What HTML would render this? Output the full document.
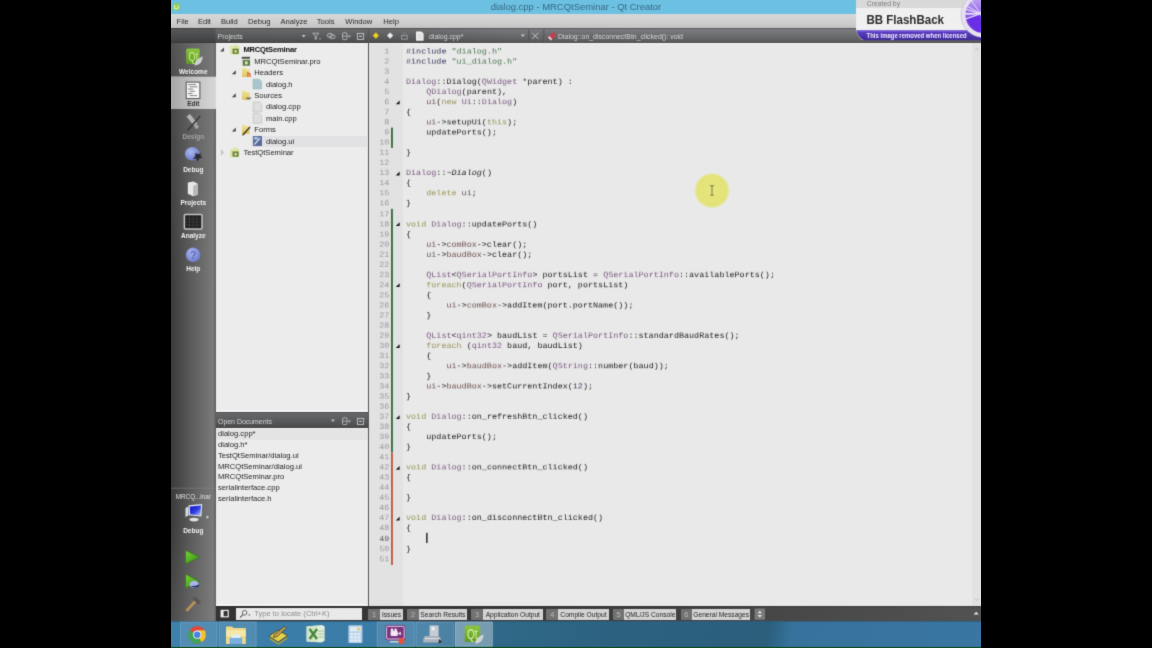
<!DOCTYPE html>
<html lang="en"><head><meta charset="utf-8"><title>dialog.cpp - MRCQtSeminar - Qt Creator</title>
<style>
*{box-sizing:border-box;margin:0;padding:0}
html,body{width:1152px;height:648px;background:#000;overflow:hidden}
body{font-family:"Liberation Sans",sans-serif;position:relative;color:#333}
.a,#scr div,#scr span,#scr svg,#scr i.b{position:absolute}
#scr pre span,#scr pre b,#scr pre i{position:static}
#scr{position:absolute;left:171px;top:0;width:810px;height:648px;overflow:hidden;background:#e9e9e9;filter:url(#soft)}
#title{left:0;top:0;width:810px;height:13.7px;background:#6cc1e2}
#title .tt{left:0;width:810px;top:0;height:13.6px;line-height:13.4px;text-align:center;font-size:9.45px;color:#3a6880}
#menu{left:0;top:13.7px;width:810px;height:14.3px;background:linear-gradient(#d6d7d8,#cfcfd0 55%,#c3c3c3)}
#menu span{top:1.1px;height:14.3px;line-height:14.3px;font-size:7.6px;color:#262626}
.bar{background:linear-gradient(#4a4a4a 0,#7a7b7e 1.4px,#727375 35%,#626364 75%,#595a5b 92%,#4c4c4c)}
#tb{left:0;top:28px;width:810px;height:15.3px}
#tb:before{content:'';position:absolute;left:0;top:0;width:810px;height:15.3px;background:linear-gradient(90deg,rgba(0,0,0,0.3) 0,rgba(0,0,0,0.3) 44px,rgba(0,0,0,0.17) 45px,rgba(0,0,0,0.15) 197px,rgba(0,0,0,0.1) 260px,rgba(0,0,0,0.03) 340px,rgba(0,0,0,0) 500px)}
#odh:before{content:'';position:absolute;left:0;top:0;width:100%;height:100%;background:rgba(0,0,0,0.16)}
.tbt{font-size:6.95px;color:#d4d4d4;line-height:15.3px;top:0.9px;white-space:nowrap}
#mode{left:0;top:43.3px;width:44.6px;height:578.1px;background:linear-gradient(rgba(116,116,116,0.4),rgba(112,112,112,0.25) 60px,rgba(110,110,110,0) 260px,rgba(128,128,128,0) 480px,rgba(128,128,128,0.25)),linear-gradient(90deg,#3a3a3a,#585858 40%,#7a7a7a 94%,#5a5a5a)}
.ml{left:0;width:44.6px;text-align:center;font-size:6.5px;font-weight:bold;color:#f2f2f2;line-height:8px;white-space:nowrap}
#tree{left:44.6px;top:43.3px;width:152.4px;height:370px;background:linear-gradient(#f8f8f8 0,#f4f4f4 0.9px,#ececec 1.6px,#ececec 366.5px,#f6f6f6 367.5px)}
.tr{font-size:7.6px;line-height:11.4px;height:11.4px;color:#1e1e1e;white-space:nowrap}
#odh{left:44.6px;top:412.4px;width:152.4px;height:15.3px}
#odl{left:44.6px;top:427.7px;width:152.4px;height:178.1px;background:linear-gradient(#f6f6f6 0,#ececec 1.4px,#ececec 175.6px,#f6f6f6 176.6px)}
#split{left:196.8px;top:28px;width:1.4px;height:578px;background:#555}
#ed{left:198.2px;top:43.3px;width:611.8px;height:562.5px;background:linear-gradient(#f6f6f6 0,#f2f2f2 0.9px,#e9e9e9 1.6px)}
#gut{left:0;top:1.2px;width:34.2px;height:561.3px;background:#e2e2e2}
pre{font-family:"Liberation Mono",monospace;font-size:8.44px;line-height:11.033px;position:absolute;white-space:pre;color:#222;transform:translateY(0.1px) scaleY(0.92);transform-origin:0 0;will-change:transform;text-rendering:geometricPrecision}
#ln{left:0;top:4.2px;width:20.4px;text-align:right;color:#9898a0}
#code{left:36.8px;top:4.2px}
.k{color:#96965a}.t{color:#7a5a80}.f{color:#705252}.s{color:#4f7a55}.p{color:#3a3a62}.n{color:#3a3a62}
#sb{left:44.6px;top:605.5px;width:765.4px;height:15.8px;background:linear-gradient(rgba(0,0,0,0.22),rgba(0,0,0,0) 2px),linear-gradient(90deg,#333 0,#383838 30%,#3e3e3e 55%,#4a4a4a 80%,#525252)}
.ob{top:3px;height:11.2px;font-size:6.65px;line-height:12.2px;white-space:nowrap;overflow:hidden}
.obn{background:#727272;color:#bcbcbc;text-align:center;font-size:7.4px}
.obl{background:#d4d4d4;color:#262626;text-align:center;}
#task{left:0;top:621.2px;width:810px;height:26px;background:linear-gradient(#2a5a78 0,rgba(42,90,120,0) 1.6px),linear-gradient(100deg,#3c80ac 0,#3a7ba6 30%,#2f6888 40.5%,#2c6280 55%,#2b5f7c 73.5%,#37729c 76.5%,#3a76a2)}
#grn{left:0;top:646.6px;width:810px;height:3px;background:#0a4a16}
</style></head>
<body>
<div id="scr">
<svg width="0" height="0" style="position:absolute"><filter id="soft" x="0" y="0" width="100%" height="100%" color-interpolation-filters="sRGB"><feConvolveMatrix order="3" kernelMatrix="0.0169 0.0962 0.0169 0.0962 0.5476 0.0962 0.0169 0.0962 0.0169" divisor="1" edgeMode="duplicate" preserveAlpha="true"/></filter></svg>
<div id="title"><div class="tt">dialog.cpp - MRCQtSeminar - Qt Creator</div></div>
<div id="menu"><span style="left:5.6px">File</span><span style="left:26.9px">Edit</span><span style="left:49.9px">Build</span><span style="left:77.1px">Debug</span><span style="left:109.5px">Analyze</span><span style="left:145.8px">Tools</span><span style="left:174.3px">Window</span><span style="left:212.3px">Help</span></div>
<div id="tb" class="bar">
<span class="tbt" style="left:46.6px">Projects</span>
<span class="tbt" style="left:258px">dialog.cpp*</span>
<span class="tbt" style="left:387px">Dialog::on_disconnectBtn_clicked(): void</span>
</div>
<div id="mode">
<div style="left:0;top:32.8px;width:44.6px;height:32.8px;background:linear-gradient(90deg,#a6a6a6,#c2c2c2 50%,#d6d6d6);border-top:0.8px solid #8a8a8a"></div>
<span class="ml" style="top:24.5px;color:#f2f2f2">Welcome</span>
<span class="ml" style="top:56.9px;color:#333">Edit</span>
<span class="ml" style="top:90.2px;color:#a4a4a4">Design</span>
<span class="ml" style="top:123.1px;color:#f2f2f2">Debug</span>
<span class="ml" style="top:156.0px;color:#f2f2f2">Projects</span>
<span class="ml" style="top:189.1px;color:#f2f2f2">Analyze</span>
<span class="ml" style="top:221.7px;color:#f2f2f2">Help</span>
<span class="ml" style="top:483.3px;color:#f2f2f2">Debug</span>
<span class="ml" style="top:449.4px;font-weight:normal;color:#e0e0e0;font-size:6.3px">MRCQ...inar</span>
</div>
<div id="tree">
<span class="tr" style="left:27.8px;top:1.10px;font-weight:bold;color:#0c0c0c;letter-spacing:-0.2px">MRCQtSeminar</span>
<span class="tr" style="left:38.7px;top:12.52px;">MRCQtSeminar.pro</span>
<span class="tr" style="left:38.7px;top:23.94px;">Headers</span>
<span class="tr" style="left:50.4px;top:35.36px;">dialog.h</span>
<span class="tr" style="left:38.7px;top:46.78px;">Sources</span>
<span class="tr" style="left:50.4px;top:58.20px;">dialog.cpp</span>
<span class="tr" style="left:50.4px;top:69.62px;">main.cpp</span>
<span class="tr" style="left:38.7px;top:81.04px;">Forms</span>
<div style="left:35.199999999999996px;top:92.46px;width:116.2px;height:11.4px;background:#e2e2e4"></div>
<span class="tr" style="left:50.4px;top:92.46px;">dialog.ui</span>
<span class="tr" style="left:27.8px;top:103.88px;">TestQtSeminar</span>
</div>
<div id="odh" class="bar"><span class="tbt" style="left:2.4px;top:1.4px">Open Documents</span></div>
<div id="odl">
<div style="left:0;top:1.10px;width:152.4px;height:10.8px;background:#e4e4e4"></div>
<span class="tr" style="left:2.4px;top:0.80px">dialog.cpp*</span>
<span class="tr" style="left:2.4px;top:11.55px">dialog.h*</span>
<span class="tr" style="left:2.4px;top:22.30px">TestQtSeminar/dialog.ui</span>
<span class="tr" style="left:2.4px;top:33.05px">MRCQtSeminar/dialog.ui</span>
<span class="tr" style="left:2.4px;top:43.80px">MRCQtSeminar.pro</span>
<span class="tr" style="left:2.4px;top:54.55px">serialinterface.cpp</span>
<span class="tr" style="left:2.4px;top:65.30px">serialinterface.h</span>
</div>
<div id="split"></div>
<div id="ed"><div id="gut"></div>
<pre id="ln">1
2
3
4
5
6
7
8
9
10
11
12
13
14
15
16
17
18
19
20
21
22
23
24
25
26
27
28
29
30
31
32
33
34
35
36
37
38
39
40
41
42
43
44
45
46
47
48
<b style="font-weight:normal;color:#555">49</b>
50
51</pre>
<pre id="code"><span class="p">#include</span> <span class="s">"dialog.h"</span>
<span class="p">#include</span> <span class="s">"ui_dialog.h"</span>

<span class="t">Dialog</span>::Dialog(<span class="t">QWidget</span> *parent) :
    <span class="t">QDialog</span>(parent),
    <span class="f">ui</span>(<span class="k">new</span> <span class="t">Ui</span>::<span class="t">Dialog</span>)
{
    <span class="f">ui</span>-&gt;setupUi(<span class="k">this</span>);
    updatePorts();

}

<span class="t">Dialog</span>::<i>~Dialog</i>()
{
    <span class="k">delete</span> <span class="f">ui</span>;
}

<span class="k">void</span> <span class="t">Dialog</span>::updatePorts()
{
    <span class="f">ui</span>-&gt;<span class="f">comBox</span>-&gt;clear();
    <span class="f">ui</span>-&gt;<span class="f">baudBox</span>-&gt;clear();

    <span class="t">QList</span>&lt;<span class="t">QSerialPortInfo</span>&gt; portsList = <span class="t">QSerialPortInfo</span>::availablePorts();
    <span class="k">foreach</span>(<span class="t">QSerialPortInfo</span> port, portsList)
    {
        <span class="f">ui</span>-&gt;<span class="f">comBox</span>-&gt;addItem(port.portName());
    }

    <span class="t">QList</span>&lt;<span class="t">qint32</span>&gt; baudList = <span class="t">QSerialPortInfo</span>::standardBaudRates();
    <span class="k">foreach</span> (<span class="t">qint32</span> baud, baudList)
    {
        <span class="f">ui</span>-&gt;<span class="f">baudBox</span>-&gt;addItem(<span class="t">QString</span>::number(baud));
    }
    <span class="f">ui</span>-&gt;<span class="f">baudBox</span>-&gt;setCurrentIndex(<span class="n">12</span>);
}

<span class="k">void</span> <span class="t">Dialog</span>::on_refreshBtn_clicked()
{
    updatePorts();
}

<span class="k">void</span> <span class="t">Dialog</span>::on_connectBtn_clicked()
{

}

<span class="k">void</span> <span class="t">Dialog</span>::on_disconnectBtn_clicked()
{

}
</pre>
</div>
<div id="sb">
<span class="ob obn" style="left:152.8px;width:11.2px">1</span><span class="ob obl" style="left:164.0px;width:23.8px">Issues</span>
<span class="ob obn" style="left:191.6px;width:11.5px">2</span><span class="ob obl" style="left:203.1px;width:48.4px">Search Results</span>
<span class="ob obn" style="left:255.5px;width:11.8px">3</span><span class="ob obl" style="left:267.3px;width:59.9px">Application Output</span>
<span class="ob obn" style="left:330.8px;width:11.7px">4</span><span class="ob obl" style="left:342.5px;width:50.7px">Compile Output</span>
<span class="ob obn" style="left:397.3px;width:11.1px">5</span><span class="ob obl" style="left:408.4px;width:52.5px">QML/JS Console</span>
<span class="ob obn" style="left:465.0px;width:11.4px">6</span><span class="ob obl" style="left:476.4px;width:58.4px">General Messages</span>
<div style="left:20.6px;top:2.9px;width:125.4px;height:11.4px;background:#e9e9e9"></div>
<span style="left:38.7px;top:2.9px;line-height:11.4px;font-size:7.55px;color:#8c8c8c;white-space:nowrap">Type to locate (Ctrl+K)</span>
</div>
<div id="task"></div><div id="grn"></div>
<svg id="ov" viewBox="171 0 810 648" width="810" height="648" style="left:0;top:0">
<defs>
<linearGradient id="gq" x1="0" y1="0" x2="0" y2="1"><stop offset="0" stop-color="#8cc63f"/><stop offset="1" stop-color="#5f9a22"/></linearGradient>
<linearGradient id="ged" x1="0" y1="0" x2="1" y2="0"><stop offset="0" stop-color="#a6a6a6"/><stop offset="0.5" stop-color="#c2c2c2"/><stop offset="1" stop-color="#d6d6d6"/></linearGradient>
<linearGradient id="gfo" x1="0" y1="0" x2="0" y2="1"><stop offset="0" stop-color="#efe49c"/><stop offset="1" stop-color="#dcc462"/></linearGradient>
<linearGradient id="gpl" x1="0" y1="0" x2="1" y2="1"><stop offset="0" stop-color="#7ad43a"/><stop offset="1" stop-color="#2f8a10"/></linearGradient>
<radialGradient id="gbl" cx="0.4" cy="0.35" r="0.7"><stop offset="0" stop-color="#aab8f0"/><stop offset="1" stop-color="#6a78c8"/></radialGradient>
<linearGradient id="gsc" x1="0" y1="0" x2="1" y2="1"><stop offset="0" stop-color="#1010c8"/><stop offset="0.55" stop-color="#3040e0"/><stop offset="1" stop-color="#b8c8f8"/></linearGradient>
<linearGradient id="gpur" x1="0" y1="0" x2="0" y2="1"><stop offset="0" stop-color="#9078e8"/><stop offset="0.22" stop-color="#5a3cc0"/><stop offset="1" stop-color="#3f2a98"/></linearGradient>
<radialGradient id="gyc" cx="0.5" cy="0.5" r="0.5"><stop offset="0" stop-color="#e8e88c"/><stop offset="0.25" stop-color="#e4e47c"/><stop offset="0.86" stop-color="#e3e378"/><stop offset="1" stop-color="#e6e6a0" stop-opacity="0.5"/></radialGradient>
<linearGradient id="gdisc" x1="0" y1="0" x2="0" y2="1"><stop offset="0" stop-color="#c0aaf4"/><stop offset="0.45" stop-color="#9468e6"/><stop offset="0.7" stop-color="#7a44e2"/><stop offset="1" stop-color="#6a30e0"/></linearGradient>
</defs>
<rect x="186.2" y="48.6" width="13.6" height="15.4" rx="1.6" fill="url(#gq)"/>
<text x="188.6" y="61.2" font-family="Liberation Sans,sans-serif" font-size="13.6" fill="#cdec98" textLength="9.6" lengthAdjust="spacingAndGlyphs">Qt</text>
<path d="M194.4 65.6 Q194.6 59.5 202.8 56.3 Q202.6 65 194.4 65.6z" fill="#cfd0d4"/>
<rect x="186.2" y="82.1" width="13.7" height="16.5" fill="#f6f6f6" stroke="#5a5a5a" stroke-width="1.1"/>
<rect x="188" y="84.2" width="8" height="0.9" fill="#777"/>
<rect x="189.5" y="86.4" width="8.0" height="0.9" fill="#777"/>
<rect x="188" y="88.6" width="5" height="0.9" fill="#777"/>
<rect x="189.5" y="90.8" width="5.5" height="0.9" fill="#777"/>
<rect x="188" y="93.0" width="4.5" height="0.9" fill="#777"/>
<rect x="189.5" y="95.2" width="7.5" height="0.9" fill="#777"/>
<path d="M186.5 116.5 l3.5 -2.5 l7.5 9.5 l-3.5 2.6z" fill="#b4b4b4"/>
<path d="M199.8 115.5 l1 0.9 l-11.5 13.4 l-2.6 1.4 l1.2 -2.6z" fill="#3c3c3c"/>
<circle cx="196.6" cy="126.8" r="2" fill="#a8a8a8"/>
<ellipse cx="192.2" cy="153.8" rx="7.4" ry="6.8" fill="url(#gbl)"/>
<path d="M195.5 153 l3.5 1.2 l2.5 -1 l-1.2 2.6 l2.4 2.2 l-3.4 0.2 l-1.4 3.2 l-1.6 -2.8 l-3.6 0.6 l2.4 -2.6z" fill="#2a2a30"/>
<path d="M187.8 182.5 l5.6 -1 l4.4 2.2 v11 l-4.6 1.6 l-5.4 -2.6z" fill="#e8e8e8"/>
<path d="M193.2 186 l4.6 -2.3 v11 l-4.6 1.6z" fill="#b8b8b8"/>
<rect x="184.4" y="214.6" width="17.6" height="14.4" rx="1" fill="#202020" stroke="#c4c4c4" stroke-width="1.5"/>
<path d="M186 219h14.4M186 222h14.4M186 225h14.4M189.5 216v11.6M193.2 216v11.6M196.9 216v11.6" stroke="#484848" stroke-width="0.6" fill="none"/>
<circle cx="193.1" cy="254.8" r="7.3" fill="url(#gbl)"/>
<text x="193.1" y="258.6" text-anchor="middle" font-family="Liberation Sans,sans-serif" font-weight="bold" font-size="10.5" fill="#5a6cb8">?</text>
<rect x="171" y="487.8" width="44.6" height="0.7" fill="#8a8a8a" opacity="0.7"/>
<path d="M185.5 508 l3 -1.5 v9 l-3 1.5z" fill="#d8dce4"/>
<path d="M188.6 505.2 l13.6 -1.2 l-0.8 12.6 l-12.4 -1.4z" fill="#dfe4f0"/>
<path d="M189.8 506.4 l11.2 -1 l-0.7 10 l-10.2 -1.2z" fill="url(#gsc)"/>
<ellipse cx="194" cy="519.6" rx="4.6" ry="1.8" fill="#e4e4e4"/>
<path d="M206.6 515.4 l2.4 1.7 l-2.4 1.7z" fill="#e0e0e0"/>
<path d="M185.6 550.4 L199.8 557 L185.6 563.8z" fill="url(#gpl)" stroke="#3a7a18" stroke-width="0.8" stroke-linejoin="round"/>
<path d="M185.6 574.2 L199.4 581 L185.6 588.2z" fill="url(#gpl)" stroke="#3a7a18" stroke-width="0.8" stroke-linejoin="round"/>
<ellipse cx="194.2" cy="584.4" rx="4.6" ry="3.6" fill="#a8b4e8"/>
<path d="M190.5 586 q4 3.4 8.4 0.4 l0.4 -2.2 q-4 2.2 -8.8 1.8z" fill="#2a3468"/>
<path d="M185.4 610 L194.2 600.4 L196.4 602.2 L187.4 611.8z" fill="#b69258"/>
<path d="M192.6 598.4 l2.2 -1.8 l5.8 4.8 l-1 2.6 l-2 0.2z" fill="#5a5650"/>
<path d="M301.8 35 h3.8 l-1.9 2.4z" fill="#c6c6c6"/>
<path d="M312.8 33.2 h6 l-2.4 3 v3 h-1.2 v-3z" fill="none" stroke="#c6c6c6" stroke-width="0.8"/><circle cx="320" cy="38.8" r="0.7" fill="#c6c6c6"/>
<ellipse cx="330" cy="35.4" rx="2.8" ry="2" fill="none" stroke="#c6c6c6" stroke-width="0.8"/><ellipse cx="332.4" cy="36.8" rx="2.8" ry="2" fill="none" stroke="#c6c6c6" stroke-width="0.8"/>
<rect x="342.6" y="32.8" width="4.4" height="6.8" rx="0.8" fill="none" stroke="#c6c6c6" stroke-width="0.8"/><path d="M342.6 36.2h4.4M348.2 36.2h2.4M349.4 35v2.4" stroke="#c6c6c6" stroke-width="0.7"/>
<rect x="357.4" y="33.4" width="6.2" height="6" fill="none" stroke="#c6c6c6" stroke-width="0.9"/><rect x="359" y="35.8" width="3" height="1.1" fill="#c6c6c6"/>
<path d="M372.6 35.6 l3.3 -3.4 l3.1 3.4 l-3.1 3.4z" fill="#e6d428" stroke="#8a6a10" stroke-width="0.5"/>
<path d="M387 35.6 l3.1 -3.2 l3.1 3.2 l-3.1 3.2z" fill="#ececec"/>
<rect x="401.6" y="35.6" width="5.6" height="3.6" fill="none" stroke="#a0a0a0" stroke-width="0.9"/><path d="M402.8 35.6 v-1.4 a1.6 1.6 0 0 1 3.2 0 v1.4" fill="none" stroke="#8a8a8a" stroke-width="0.7"/>
<path d="M416 31.4 h5.4 l2.2 2.2 v7.2 h-7.6z" fill="#f0f0f0"/><path d="M417.4 34.6h4.6M417.4 36.4h4.6M417.4 38.2h4.6" stroke="#c4c4c4" stroke-width="0.6"/>
<path d="M520.8 34.4 h4.2 l-2.1 2.6z" fill="#c6c6c6"/>
<rect x="528.6" y="29.4" width="0.7" height="13" fill="#404040"/><rect x="529.3" y="29.4" width="0.6" height="13" fill="#6c6c6c"/>
<path d="M532.2 32.8 l6.2 6.2 M538.4 32.8 l-6.2 6.2" stroke="#c8c8c8" stroke-width="1"/>
<rect x="543.6" y="29.4" width="0.7" height="13" fill="#404040"/><rect x="544.3" y="29.4" width="0.6" height="13" fill="#6c6c6c"/>
<path d="M547.8 37.6 l5.6 -5.6 l3 2.6 l-5.6 5.8z" fill="#cc3a4c"/><path d="M547.8 37.6 l1.5 -1.5 l3 2.8 l-1.5 1.5z" fill="#ecc8cc"/>
<path d="M331 419.6 h3.8 l-1.9 2.4z" fill="#c6c6c6"/>
<rect x="342.6" y="417.8" width="4.4" height="6.8" rx="0.8" fill="none" stroke="#c6c6c6" stroke-width="0.8"/><path d="M342.6 421.2h4.4M348.2 421.2h2.4M349.4 420v2.4" stroke="#c6c6c6" stroke-width="0.7"/>
<rect x="357.4" y="418.4" width="6.2" height="6" fill="none" stroke="#c6c6c6" stroke-width="0.9"/><rect x="359" y="420.8" width="3" height="1.1" fill="#c6c6c6"/>
<path d="M224.0 47.5 v4 h-4z" fill="#4a4a4a"/>
<path d="M235.79999999999998 70.34 v4 h-4z" fill="#4a4a4a"/>
<path d="M235.79999999999998 93.17999999999999 v4 h-4z" fill="#4a4a4a"/>
<path d="M235.79999999999998 127.43999999999998 v4 h-4z" fill="#4a4a4a"/>
<path d="M221.4 150.28000000000003 l2.4 2.2 l-2.4 2.2z" fill="#d8d8d8" stroke="#aaa" stroke-width="0.6"/>
<path d="M230 46.1 h3 l1 -1.4 h3 l1 1.4 h1.2 v8.4 h-9.2z" fill="#dfe4a8"/>
<rect x="232.6" y="48.7" width="6" height="5.2" fill="#647c34"/>
<rect x="234.4" y="50.1" width="2.4" height="2.6" fill="#d8e0b0"/>
<path d="M230 148.88000000000002 h3 l1 -1.4 h3 l1 1.4 h1.2 v8.4 h-9.2z" fill="#dfe4a8"/>
<rect x="232.6" y="151.48000000000002" width="6" height="5.2" fill="#647c34"/>
<rect x="234.4" y="152.88000000000002" width="2.4" height="2.6" fill="#d8e0b0"/>
<rect x="241.6" y="55.92" width="8.6" height="10.2" rx="0.8" fill="#dcdcd8"/><rect x="241.79999999999998" y="56.92" width="8.2" height="1.8" fill="#4a4a4a"/><rect x="242.79999999999998" y="59.92" width="7.2" height="5.8" fill="#5f7f42"/><rect x="245.0" y="61.32000000000001" width="2.6" height="3" fill="#dfe6c8"/>
<path d="M242.0 67.74000000000001 h3.2 l1 1.4 h3.4 v7.8 h-7.6z" fill="url(#gfo)"/>
<text x="247" y="77.1" font-family="Liberation Sans,sans-serif" font-weight="bold" font-size="6.5" fill="#d8401c">h</text>
<path d="M242.0 90.58 h3.2 l1 1.4 h3.4 v7.8 h-7.6z" fill="url(#gfo)"/>
<path d="M246 98.78 h4.6 M247.4 96.97999999999999 l1.6 1.8 l1.6 -1.8" stroke="#555" stroke-width="0.9" fill="none"/>
<path d="M242.0 124.83999999999999 h3.2 l1 1.4 h3.4 v7.8 h-7.6z" fill="url(#gfo)"/>
<path d="M242.6 134.04 l6.8 -7.6 l1.2 1 l-6.6 7.6 l-2 0.6z" fill="#4a4430"/>
<path d="M253 79.16000000000001 h6.2 l2.4 2.4 v7.4 h-8.6z" fill="#a9c4cb" stroke="#9ab8c0" stroke-width="0.6"/>
<path d="M253.2 102.00000000000001 h6.2 l2.4 2.4 v7.4 h-8.6z" fill="#dedede" stroke="#b8b8b8" stroke-width="0.6"/>
<path d="M253.2 113.42 h6.2 l2.4 2.4 v7.4 h-8.6z" fill="#dedede" stroke="#b8b8b8" stroke-width="0.6"/>
<rect x="253" y="136.06" width="9" height="10" fill="#586a9c"/><path d="M254.4 144.46 l5.8 -6.6" stroke="#d8deec" stroke-width="1.3"/><rect x="254" y="137.06" width="4" height="2.6" fill="#aabce0"/>
<rect x="391" y="127.6" width="1.9" height="20.3" fill="#35703c"/>
<rect x="391" y="208.8" width="1.9" height="243.6" fill="#35703c"/>
<rect x="391" y="452.4" width="1.9" height="112.6" fill="#c05a40"/>
<path d="M399.6 100.5 v3.8 h-3.8z" fill="#161616"/>
<path d="M399.6 171.6 v3.8 h-3.8z" fill="#161616"/>
<path d="M399.6 222.3 v3.8 h-3.8z" fill="#161616"/>
<path d="M399.6 283.2 v3.8 h-3.8z" fill="#161616"/>
<path d="M399.6 344.2 v3.8 h-3.8z" fill="#161616"/>
<path d="M399.6 415.2 v3.8 h-3.8z" fill="#161616"/>
<path d="M399.6 466.0 v3.8 h-3.8z" fill="#161616"/>
<path d="M399.6 516.7 v3.8 h-3.8z" fill="#161616"/>
<rect x="426.1" y="532.8" width="1.5" height="10.2" fill="#2a2a2a"/>
<rect x="972" y="43.3" width="9" height="562.5" fill="#e2e2e2"/>
<path d="M974.6 50.6 l2.2 -2.2 l2.2 2.2" stroke="#b8b8b8" stroke-width="0.8" fill="none"/><path d="M974.6 598.4 l2.2 2.2 l2.2 -2.2" stroke="#b8b8b8" stroke-width="0.8" fill="none"/>
<circle cx="712" cy="190.6" r="17.6" fill="url(#gyc)"/>
<path d="M710.2 185.4 q1.8 0 1.8 1 q0 -1 1.8 -1 M712 186 v8.6 M710.2 195.4 q1.8 0 1.8 -1 q0 1 1.8 1" stroke="#5a5a30" stroke-width="0.8" fill="none"/>
<rect x="220.6" y="609.8" width="8.2" height="7.6" fill="#f0f0f0"/><rect x="223.6" y="611" width="4" height="5.2" fill="#303030"/>
<circle cx="244.6" cy="612.8" r="2.3" fill="none" stroke="#555" stroke-width="0.9"/><path d="M243 614.6 l-3 3" stroke="#555" stroke-width="1.1"/><path d="M248 614.4 h2.6 l-1.3 1.6z" fill="#666"/>
<rect x="754.6" y="608.5" width="10.4" height="11.2" fill="#7a7a7a"/><path d="M757.6 613.2 l2.2 -2.4 l2.2 2.4z M757.6 615 l2.2 2.4 l2.2 -2.4z" fill="#e8e8e8"/>
<path d="M973.6 614.6 l2.6 -2.8 l2.6 2.8z" fill="#e8e8e8"/>
<rect x="180.6" y="622" width="36.400000000000006" height="24.2" fill="#cfd8dc" fill-opacity="0.15" stroke="#e8f0f4" stroke-opacity="0.3" stroke-width="0.7"/>
<rect x="219.6" y="622" width="36.50000000000003" height="24.2" fill="#cfd8dc" fill-opacity="0.15" stroke="#e8f0f4" stroke-opacity="0.3" stroke-width="0.7"/>
<rect x="377.2" y="622" width="37.0" height="24.2" fill="#cfd8dc" fill-opacity="0.15" stroke="#e8f0f4" stroke-opacity="0.3" stroke-width="0.7"/>
<rect x="416" y="622" width="37.30000000000001" height="24.2" fill="#cfd8dc" fill-opacity="0.15" stroke="#e8f0f4" stroke-opacity="0.3" stroke-width="0.7"/>
<rect x="455.3" y="622" width="37.0" height="24.2" fill="#cfd8dc" fill-opacity="0.45" stroke="#e8f0f4" stroke-opacity="0.5" stroke-width="0.7"/>
<circle cx="197.2" cy="634.7" r="8.8" fill="#e0483a"/>
<path d="M197.2 634.7 L189.57999999999998 630.3000000000001 A8.8 8.8 0 0 0 201.6 642.32z" fill="#3fa455"/>
<path d="M197.2 634.7 L201.6 642.32 A8.8 8.8 0 0 0 204.82 630.3000000000001 L197.2 630.3000000000001z" fill="#f2c32e"/>
<circle cx="197.2" cy="634.7" r="4.1" fill="#f4f4f4"/><circle cx="197.2" cy="634.7" r="3.2" fill="#4a80e8"/>
<path d="M226 626.4 h6 l1.4 1.6 h12.4 v16 h-19.8z" fill="#eeda88"/><rect x="226" y="630.2" width="19.8" height="6" fill="#f4e8a6"/><rect x="229.6" y="637.6" width="12.6" height="6.4" fill="#78aee0"/><rect x="231.6" y="634.6" width="8.6" height="3.2" fill="#e4eef8"/>
<path d="M269 636.2 l9 -6 l9.4 5.4 l-9.2 6.4z" fill="#e6d24a" stroke="#4a4420" stroke-width="0.8"/><path d="M270 638.6 l8.4 5.4 l8.8 -6" stroke="#b8a430" stroke-width="1.4" fill="none"/><path d="M274 634.8 l10.4 -8.4 l2 1.6 l-9.6 8.8 l-3.4 0.6z" fill="#c0a050" stroke="#403418" stroke-width="0.7"/>
<path d="M306.6 626.4 l15 -1.4 l3 1.2 v14.6 l-3 1.6 l-15 -1z" fill="#e2eedc"/><path d="M306.6 626.4 l10.6 -1 v16.4 l-10.6 -0.6z" fill="#d2e4c8"/><path d="M309.6 629 l7.4 10 M317 629 l-7.4 10" stroke="#47873c" stroke-width="2.4"/><path d="M318 631 h5.6 M318 634 h5.6 M318 637 h5.6" stroke="#9cc490" stroke-width="1.2"/>
<rect x="348.4" y="625.2" width="14" height="17.8" rx="0.8" fill="#b4cfe8"/><rect x="350" y="626.8" width="10.8" height="4.6" fill="#dfeaf4"/><rect x="357" y="627.8" width="3" height="2.6" fill="#e8c868"/>
<rect x="350.2" y="633.0" width="2.9" height="2.3" fill="#e4eef8"/>
<rect x="353.9" y="633.0" width="2.9" height="2.3" fill="#e4eef8"/>
<rect x="357.6" y="633.0" width="2.9" height="2.3" fill="#e4eef8"/>
<rect x="350.2" y="636.2" width="2.9" height="2.3" fill="#e4eef8"/>
<rect x="353.9" y="636.2" width="2.9" height="2.3" fill="#e4eef8"/>
<rect x="357.6" y="636.2" width="2.9" height="2.3" fill="#e4eef8"/>
<rect x="350.2" y="639.4" width="2.9" height="2.3" fill="#e4eef8"/>
<rect x="353.9" y="639.4" width="2.9" height="2.3" fill="#e4eef8"/>
<rect x="357.6" y="639.4" width="2.9" height="2.3" fill="#e4eef8"/>
<rect x="385.4" y="625.2" width="20" height="15" rx="1.6" fill="#7a3480"/><rect x="386.6" y="626.4" width="17.6" height="12.6" rx="1" fill="none" stroke="#e8d8ea" stroke-width="0.9"/><rect x="390.6" y="631" width="7.2" height="5" rx="1" fill="#f4ecf4"/><path d="M397.8 633.5 l3 -1.8 v3.6z" fill="#f4ecf4"/><circle cx="392" cy="630" r="1.4" fill="#f4ecf4"/><circle cx="395.6" cy="630" r="1.4" fill="#f4ecf4"/><path d="M390 641.8 h10" stroke="#d8d8e0" stroke-width="1.4"/><circle cx="401.4" cy="641" r="3" fill="#e8503a"/>
<rect x="429.6" y="625.4" width="9" height="12" fill="#c4ccd4"/><rect x="431.6" y="626.8" width="3" height="3.6" fill="#f0f0f0"/><path d="M424.8 636 h14 l2 3.4 v3.2 h-17.6 v-3.2z" fill="#aab2ba"/><path d="M425 638.6 h15.4" stroke="#dfe3e8" stroke-width="1"/><path d="M439 639 l3.2 3 l-3.6 1.2z" fill="#2a2a2a"/>
<rect x="464.6" y="625.4" width="15.6" height="16.6" rx="1.8" fill="url(#gq)"/><text x="467" y="639.4" font-family="Liberation Sans,sans-serif" font-size="14.6" fill="#d8f2ac" textLength="10.6" lengthAdjust="spacingAndGlyphs">Qt</text><path d="M475 643.6 Q475.4 637 483.6 634.4 Q483.4 643 475 643.6z" fill="#d0d6d0"/>
<circle cx="176.5" cy="6.8" r="3.7" fill="#8fcc5a"/><path d="M175.3 5.2 a2 2 0 1 0 2.4 0.2" stroke="#f0f4b0" stroke-width="1.1" fill="none"/>
<path d="M856 0 h125 v40 h-118 q-4 -1 -7 -9.6z" fill="#f0f0f0"/>
<rect x="856" y="0" width="125" height="8" fill="#d9d9d9"/>
<path d="M856 30 h125 v10.3 h-117 q-5 -1.4 -8 -10.3z" fill="url(#gpur)"/>
<circle cx="983.4" cy="15" r="22.4" fill="#e6e2ee" stroke="#b8b4c0" stroke-width="0.6"/>
<circle cx="983.4" cy="15" r="18" fill="url(#gdisc)"/>
<path d="M980.5 14.6 L966.9 19.0 L969.5 24.6 L974.5 29.6 L981.5 32.0z" fill="#6a2ee6"/>
<path d="M980.5 13.6 L969.8 -1.6" stroke="#e4dcfa" stroke-width="1.0"/>
<path d="M980.5 13.6 L964.2 4.6" stroke="#e4dcfa" stroke-width="1.0"/>
<path d="M980.5 13.6 L962.7 8.2" stroke="#e4dcfa" stroke-width="1.1"/>
<path d="M980.5 13.6 L961.9 13.9" stroke="#e4dcfa" stroke-width="1.6"/>
<path d="M980.5 13.6 L963.0 20.0" stroke="#e4dcfa" stroke-width="1.2"/>
<circle cx="982.0" cy="13.6" r="2.6" fill="#cfd4f4" opacity="0.8"/>
<text x="866.8" y="5.6" font-family="Liberation Sans,sans-serif" font-size="6.8" fill="#7c7c7c">Created by</text>
<text x="866.4" y="24.4" font-family="Liberation Sans,sans-serif" font-weight="bold" font-size="13.2" fill="#2c2c2c" textLength="77.6" lengthAdjust="spacingAndGlyphs">BB FlashBack</text>
<text x="866.6" y="37.8" font-family="Liberation Sans,sans-serif" font-weight="bold" font-size="6.3" fill="#f2ecff" textLength="100" lengthAdjust="spacingAndGlyphs">This image removed when licensed</text>
</svg>
</div>
</body></html>
